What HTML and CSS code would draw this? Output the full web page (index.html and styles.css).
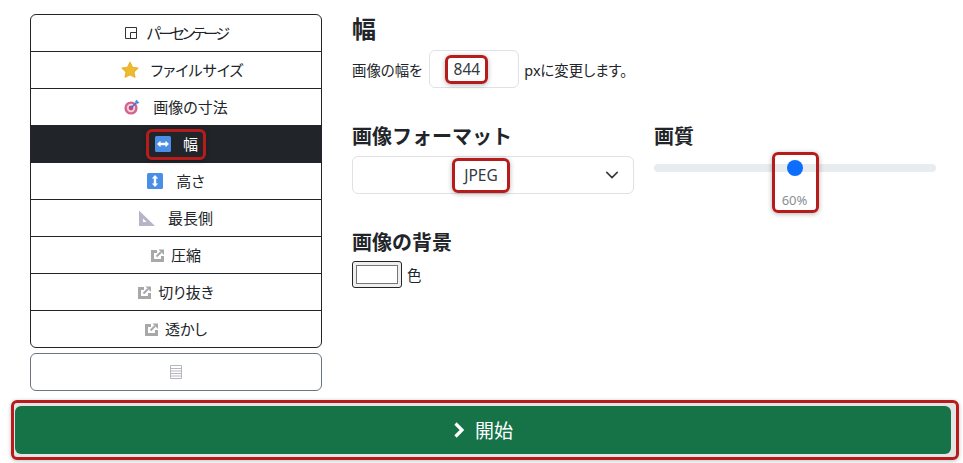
FILE: index.html
```html
<!DOCTYPE html>
<html lang="ja">
<head>
<meta charset="utf-8">
<title>画像の幅を変更</title>
<link rel="stylesheet" href="styles.css">
</head>
<body>
<div class="layout">
  <aside class="side">
    <nav class="menu">
      <a class="item item-pct"><svg class="ico ico-s" viewBox="0 0 12 12"><path d="M.5.500h11v11H.5z M5.500 11.500V5.500h6" fill="none" stroke="#333" stroke-width="1"/></svg><span class="lbl lbl-pct">パーセンテージ</span></a>
      <a class="item item-star"><svg class="ico ico-star" viewBox="0 0 16 16"><path d="M8 1l2.200 4.500 4.900.7-3.600 3.400.9 4.900L8 12.200l-4.400 2.300.9-4.900L.9 6.200l4.900-.7z" fill="#eebb2e" stroke="#e9b22b" stroke-width="1" stroke-linejoin="round"/></svg><span class="lbl lbl-file">ファイルサイズ</span></a>
      <a class="item"><svg class="ico" viewBox="0 0 16 16"><circle cx="7" cy="9" r="6.600" fill="#d9618f"/><circle cx="7" cy="9" r="4.200" fill="#f1d5de"/><circle cx="7" cy="9" r="2.400" fill="#c94a7c"/><path d="M7 9l6-6" stroke="#3c78c8" stroke-width="1.600"/><path d="M11 2.500l2-2 .6 1.900 1.900.6-2 2z" fill="#3f8be0"/></svg><span class="lbl">画像の寸法</span></a>
      <a class="item active"><span class="mark mark-nav"><svg class="ico" viewBox="0 0 16 16"><rect width="16" height="16" rx="1.500" fill="#4a8ee6"/><path d="M2 8l3.500-3.200v2h5v-2L14 8l-3.500 3.200v-2h-5v2z" fill="#fff"/></svg><span class="lbl">幅</span></span></a>
      <a class="item"><svg class="ico" viewBox="0 0 16 16"><rect width="16" height="16" rx="1.500" fill="#4a8ee6"/><path d="M8 2l3.200 3.500h-2v5h2L8 14l-3.200-3.500h2v-5h-2z" fill="#fff"/></svg><span class="lbl">高さ</span></a>
      <a class="item"><svg class="ico" viewBox="0 0 16 16"><path d="M0 .5L16 16H0z M4 8.500v3.500h3.600z" fill="#b8b4c6" fill-rule="evenodd"/></svg><span class="lbl">最長側</span></a>
      <a class="item"><svg class="ico ico-m" viewBox="0 0 13 13"><path d="M0 1h6v3H3v6h7V7h3v6H0z" fill="#a8a8a8"/><path d="M5.500 7.500L10 3" stroke="#a8a8a8" stroke-width="2"/><path d="M7.500.5H13V6z" fill="#a8a8a8"/></svg><span class="lbl">圧縮</span></a>
      <a class="item"><svg class="ico ico-m" viewBox="0 0 13 13"><path d="M0 1h6v3H3v6h7V7h3v6H0z" fill="#a8a8a8"/><path d="M5.500 7.500L10 3" stroke="#a8a8a8" stroke-width="2"/><path d="M7.500.5H13V6z" fill="#a8a8a8"/></svg><span class="lbl">切り抜き</span></a>
      <a class="item"><svg class="ico ico-m" viewBox="0 0 13 13"><path d="M0 1h6v3H3v6h7V7h3v6H0z" fill="#a8a8a8"/><path d="M5.500 7.500L10 3" stroke="#a8a8a8" stroke-width="2"/><path d="M7.500.5H13V6z" fill="#a8a8a8"/></svg><span class="lbl">透かし</span></a>
    </nav>
    <div class="more"><svg class="more-ico" viewBox="0 0 12 14"><path d="M.5.500h11v13H.5z M.5 3.500h11 M.5 6h11 M.5 8.500h11 M.5 11h11" fill="none" stroke="#b4b8bc" stroke-width="1"/></svg></div>
  </aside>
  <main class="main">
    <h2 class="title">幅</h2>
    <div class="width-row">
      <span>画像の幅を</span>
      <div class="num-box"><span class="mark mark-num">844</span></div>
      <span>pxに変更します。</span>
    </div>
    <div class="opts">
      <section>
        <h3 class="head">画像フォーマット</h3>
        <div class="select"><span class="mark mark-sel">JPEG</span><svg class="chev" viewBox="0 0 16 16"><path d="M2 5l6 6 6-6" fill="none" stroke="#343a40" stroke-width="1.800" stroke-linecap="round" stroke-linejoin="round"/></svg></div>
      </section>
      <section>
        <h3 class="head">画質</h3>
        <div class="range">
          <div class="track"></div>
          <div class="mark mark-range"><span class="thumb"></span><span class="pct">60%</span></div>
        </div>
      </section>
    </div>
    <h3 class="head head-bg">画像の背景</h3>
    <div class="color-row"><span class="swatch"><span class="swatch-in"></span></span><span>色</span></div>
  </main>
</div>
<div class="start-wrap"><button class="start"><svg class="start-ico" viewBox="0 0 12 16"><path d="M2.500 1.500L9 8l-6.500 6.500" fill="none" stroke="#fff" stroke-width="3.200"/></svg><span>開始</span></button></div>
</body>
</html>
```
FILE: styles.css
```css
* { box-sizing: border-box; }
html, body { margin: 0; height: 100%; }
body {
  background: #fff;
  color: #212529;
  font-family: "Noto Sans", "Noto Sans CJK JP", sans-serif;
  font-size: 14.4px;
  font-feature-settings: "palt";
  overflow: hidden;
}
.layout {
  display: grid;
  grid-template-columns: 292px 584px;
  column-gap: 30px;
  padding: 14px 0 0 30px;
}
.menu {
  display: flex;
  flex-direction: column;
  border: 1px solid #212529;
  border-radius: 6px;
  overflow: hidden;
}
.item {
  height: 37px;
  display: flex;
  align-items: center;
  justify-content: center;
  gap: 13px;
  font-size: 15px;
  border-bottom: 1px solid #212529;
}
.item:last-child { height: 36px; border-bottom: 0; }
.item.active { background: #212529; color: #fff; }
.lbl { margin-top: -2px; }
.lbl-pct { letter-spacing: -2.700px; }
.lbl-file { margin-right: -12px; }
.item-star { gap: 12px; }
.item-pct { gap: 10px; }
.ico { width: 16px; height: 16px; flex: none; }
.ico-s { width: 12px; height: 12px; }
.ico-star { width: 18px; height: 18px; }
.ico-m { width: 13px; height: 13px; margin-right: -6px; }
.more {
  margin-top: 5px;
  height: 38px;
  border: 1px solid #6c757d;
  border-radius: 6px;
  display: flex;
  align-items: center;
  justify-content: center;
}
.more-ico { width: 12px; height: 14px; }
.mark {
  border: 3px solid #b71c1c;
  border-radius: 6px;
  box-shadow: 0 1px 5px rgba(0,0,0,.3);
}
.mark-nav {
  display: flex;
  align-items: center;
  gap: 12px;
  height: 31px;
  padding: 0 5px 0 6px;
}
.title { margin: 0; font-size: 24px; line-height: 30px; font-weight: 700; }
.width-row {
  display: flex;
  align-items: center;
  gap: 5px;
  margin-top: 6px;
  height: 38px;
}
.width-row .num-box { margin-left: 2px; }
.num-box {
  width: 90px;
  height: 38px;
  border: 1px solid #dee2e6;
  border-radius: 6px;
  padding-left: 15px;
  display: flex;
  align-items: center;
}
.mark-num {
  width: 43px;
  height: 29px;
  font-size: 15.500px;
  color: #343a40;
  display: flex;
  align-items: center;
  justify-content: center;
}
.opts {
  display: grid;
  grid-template-columns: 282px 282px;
  column-gap: 20px;
  margin-top: 34px;
}
.head {
  margin: 0;
  font-size: 20px;
  line-height: 30px;
  font-weight: 700;
  font-feature-settings: normal;
}
.select {
  position: relative;
  margin-top: 4px;
  height: 38px;
  border: 1px solid #dee2e6;
  border-radius: 6px;
  padding-right: 24px;
  display: flex;
  align-items: center;
  justify-content: center;
}
.mark-sel {
  width: 58px;
  height: 35px;
  font-size: 15.500px;
  color: #343a40;
  display: flex;
  align-items: center;
  justify-content: center;
}
.chev { position: absolute; right: 14px; top: 11px; width: 14px; height: 14px; }
.range { position: relative; height: 60px; }
.track {
  position: absolute;
  left: 0;
  right: 0;
  top: 12px;
  height: 8px;
  border-radius: 4px;
  background: #e9ecef;
}
.mark-range {
  position: absolute;
  left: 118px;
  top: 0;
  width: 47px;
  height: 61px;
  padding-right: 2px;
  display: flex;
  flex-direction: column;
  align-items: center;
}
.thumb {
  width: 16px;
  height: 16px;
  margin-top: 5px;
  border-radius: 50%;
  background: #0d6efd;
}
.pct { margin-top: 15px; font-size: 13px; line-height: 18px; color: #8a8f94; }
.head-bg { margin-top: 16px; }
.color-row {
  display: flex;
  align-items: center;
  gap: 5px;
  margin-top: 3px;
}
.swatch {
  width: 50px;
  height: 27px;
  border: 1px solid #212529;
  border-radius: 3px;
  background: #efefef;
  padding: 3px;
}
.swatch-in {
  display: block;
  height: 100%;
  border: 1px solid #767676;
  background: #fff;
}
.start-wrap {
  margin: 9px 0 0 11px;
  width: 948px;
  height: 60px;
  border: 3px solid #b71c1c;
  border-radius: 6px;
  padding: 3px 5px 3px 1px;
  background: #e4e4e4;
  box-shadow: 0 1px 4px rgba(0,0,0,.25);
}
.start {
  width: 100%;
  height: 100%;
  border: 0;
  border-radius: 6px;
  background: #157347;
  color: #fff;
  font: inherit;
  font-size: 19px;
  font-feature-settings: "palt";
  display: flex;
  align-items: center;
  justify-content: center;
  gap: 10px;
}
.start-ico { width: 12px; height: 16px; }
```
